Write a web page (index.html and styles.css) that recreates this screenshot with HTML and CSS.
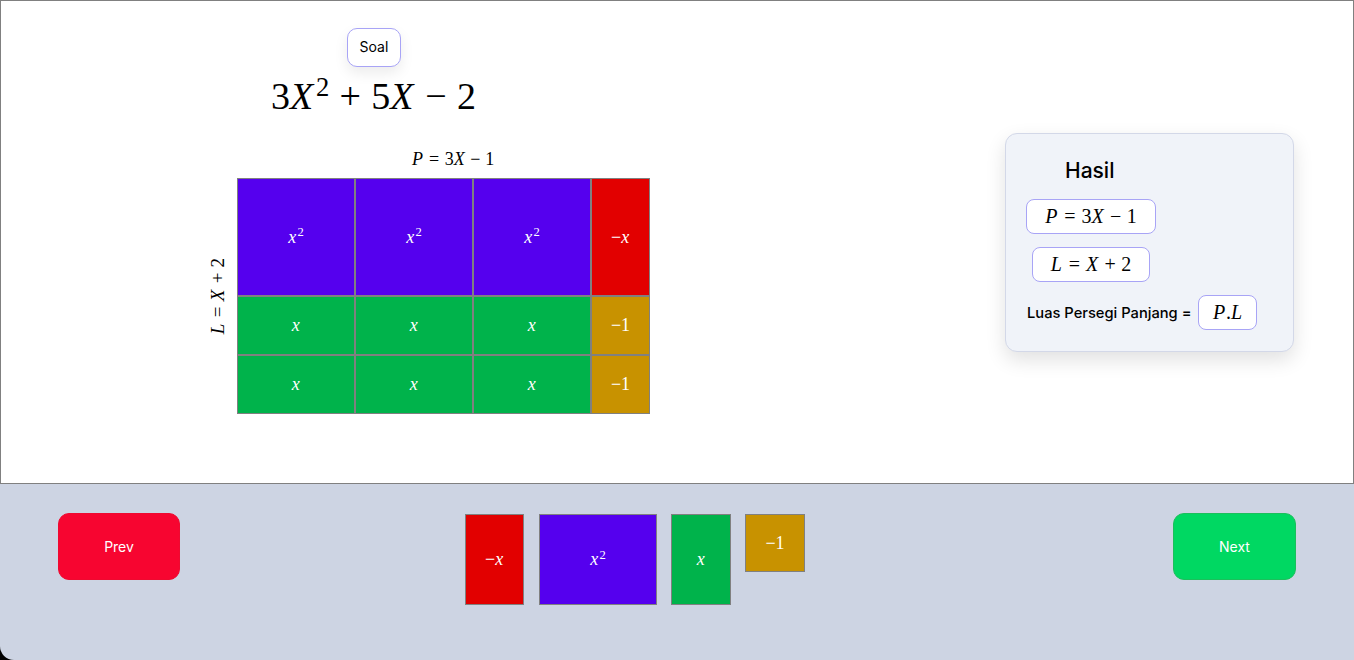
FILE: index.html
```html
<!DOCTYPE html>
<html lang="id">
<head>
<meta charset="utf-8">
<title>Luas Persegi Panjang</title>
<link rel="stylesheet" href="styles.css">
</head>
<body>
<div class="page">
  <section class="stage">
    <div class="left">
      <div class="soal">Soal</div>
      <div class="equation math"><span>3<i>X</i><sup>2</sup><b class="op">+</b>5<i>X</i><b class="op">−</b>2</span></div>
      <div class="p-label math"><span><i>P</i><b class="rel">=</b>3<i>X</i><b class="op">−</b>1</span></div>
      <div class="board">
        <div class="l-label math"><span><i>L</i><b class="rel">=</b><i>X</i><b class="op">+</b>2</span></div>
        <div class="grid">
          <div class="cell sq math"><span><i>x</i><sup>2</sup></span></div>
          <div class="cell sq math"><span><i>x</i><sup>2</sup></span></div>
          <div class="cell sq math"><span><i>x</i><sup>2</sup></span></div>
          <div class="cell neg-x math"><span>−<i>x</i></span></div>
          <div class="cell lin math"><span><i>x</i></span></div>
          <div class="cell lin math"><span><i>x</i></span></div>
          <div class="cell lin math"><span><i>x</i></span></div>
          <div class="cell one math"><span>−1</span></div>
          <div class="cell lin math"><span><i>x</i></span></div>
          <div class="cell lin math"><span><i>x</i></span></div>
          <div class="cell lin math"><span><i>x</i></span></div>
          <div class="cell one math"><span>−1</span></div>
        </div>
      </div>
    </div>
    <aside class="card">
      <h2 class="card-title">Hasil</h2>
      <div class="pill pill-p math"><span><i>P</i><b class="rel">=</b>3<i>X</i><b class="op">−</b>1</span></div>
      <div class="pill pill-l math"><span><i>L</i><b class="rel">=</b><i>X</i><b class="op">+</b>2</span></div>
      <div class="luas">
        <span class="luas-text">Luas Persegi Panjang =</span>
        <span class="pill pill-pl math"><span><i>P</i>.<i>L</i></span></span>
      </div>
    </aside>
  </section>
  <footer class="bar">
    <button class="btn prev">Prev</button>
    <div class="tiles">
      <div class="tile t-negx math"><span>−<i>x</i></span></div>
      <div class="tile t-sq math"><span><i>x</i><sup>2</sup></span></div>
      <div class="tile t-x math"><span><i>x</i></span></div>
      <div class="tile t-one math"><span>−1</span></div>
    </div>
    <button class="btn next">Next</button>
  </footer>
</div>
</body>
</html>
```

FILE: styles.css
```css
html, body {
  margin: 0;
  padding: 0;
  background: #000;
}
body {
  font-family: Inter, "Liberation Sans", sans-serif;
  color: #000;
}
.page {
  width: 1354px;
  height: 660px;
  display: flex;
  flex-direction: column;
  overflow: hidden;
}
.math {
  font-family: "Liberation Serif", "DejaVu Serif", serif;
  white-space: nowrap;
}
.math i {
  font-style: italic;
  padding-inline-end: 0.04em;
}
.math b {
  font-weight: normal;
}
.math .op {
  margin-inline: 0.27em;
}
.math .rel {
  margin-inline: 0.3em;
}
.math sup {
  font-size: 0.7em;
  line-height: 0;
  vertical-align: 0.5em;
  margin-left: 0.05em;
}
.stage {
  height: 484px;
  box-sizing: border-box;
  border: 1px solid #808080;
  background: #fff;
  display: flex;
  align-items: flex-start;
}
.left {
  display: flex;
  flex-direction: column;
  align-items: flex-start;
  padding-top: 27px;
}
.soal {
  margin-left: 346px;
  width: 54px;
  height: 39px;
  box-sizing: border-box;
  border: 1px solid #a8a4f6;
  border-radius: 10px;
  background: #fff;
  box-shadow: 0 6px 14px rgba(0, 0, 0, 0.08);
  display: flex;
  align-items: center;
  justify-content: center;
  font-size: 14px;
  padding-bottom: 2px;
}
.equation {
  margin-left: 270px;
  margin-top: 7px;
  font-size: 38px;
  line-height: 44px;
}
.p-label {
  margin-left: 411px;
  margin-top: 30px;
  font-size: 18px;
  line-height: 22px;
}
.board {
  display: flex;
  align-items: center;
  margin-left: 207px;
  margin-top: 8px;
}
.l-label {
  writing-mode: vertical-rl;
  transform: rotate(180deg);
  font-size: 19px;
  line-height: 19px;
  margin-right: 10px;
}
.grid {
  display: grid;
  grid-template-columns: 118px 118px 118px 59px;
  grid-template-rows: 118px 59px 59px;
}
.cell, .tile {
  box-sizing: border-box;
  border: 1px solid #808080;
  display: flex;
  align-items: center;
  justify-content: center;
  color: #fff;
  font-size: 18px;
}
.sq, .t-sq { background: #5500ee; }
.neg-x, .t-negx { background: #e20000; }
.lin, .t-x { background: #00b34b; }
.one, .t-one { background: #c89200; }

.card {
  margin-left: auto;
  margin-right: 59px;
  margin-top: 132px;
  width: 289px;
  height: 219px;
  box-sizing: border-box;
  background: #f0f3f9;
  border: 1px solid #d3d8e8;
  border-radius: 12px;
  box-shadow: 0 8px 20px rgba(0, 0, 0, 0.12);
  padding: 23px 0 0 20px;
  display: flex;
  flex-direction: column;
  align-items: flex-start;
}
.card-title {
  margin: 0 0 0 39px;
  font-size: 21px;
  font-weight: 500;
  line-height: 28px;
}
.pill {
  box-sizing: border-box;
  background: #fff;
  border: 1px solid #a8a4f6;
  border-radius: 8px;
  height: 35px;
  display: flex;
  align-items: center;
  justify-content: center;
  font-size: 20px;
}
.pill-p {
  width: 130px;
  margin-top: 14px;
}
.pill-l {
  width: 118px;
  margin-top: 13px;
  margin-left: 6px;
}
.luas {
  display: flex;
  align-items: center;
  margin-top: 13px;
  margin-left: 1px;
}
.luas-text {
  font-size: 14.7px;
  font-weight: 500;
}
.pill-pl {
  width: 59px;
  margin-left: 7px;
}

.bar {
  flex: 1;
  background: #cdd4e3;
  border-bottom-left-radius: 14px;
  display: flex;
  align-items: flex-start;
  padding: 29px 58px 0 58px;
}
.btn {
  width: 122px;
  height: 67px;
  border-radius: 11px;
  font-family: Inter, "Liberation Sans", sans-serif;
  font-size: 14px;
  color: #fff;
  cursor: pointer;
}
.prev {
  background: #f70530;
  border: 1px solid #ee0a30;
}
.next {
  margin-left: auto;
  width: 123px;
  background: #00d862;
  border: 1px solid #1cbf5c;
}
.tiles {
  display: flex;
  align-items: flex-start;
  margin-left: 285px;
  margin-top: 1px;
}
.t-negx { width: 59px; height: 91px; margin-right: 15px; }
.t-sq { width: 118px; height: 91px; margin-right: 14px; }
.t-x { width: 60px; height: 91px; margin-right: 14px; }
.t-one { width: 60px; height: 58px; }
```
